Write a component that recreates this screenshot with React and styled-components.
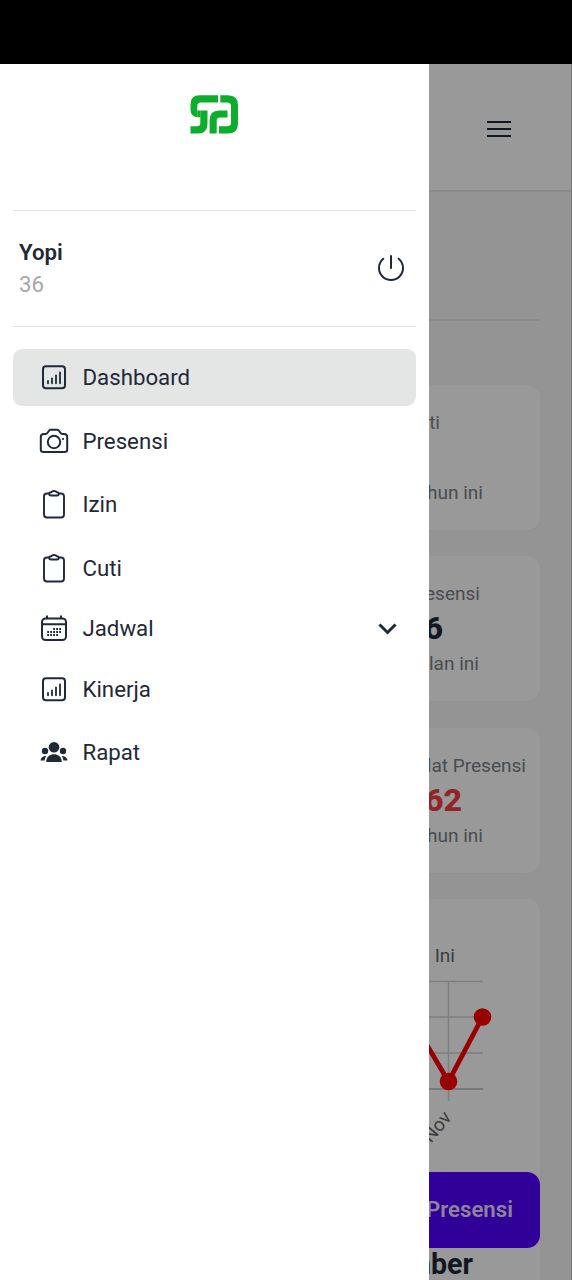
import React from 'react';
import styled, { createGlobalStyle } from 'styled-components';
import { IoPowerOutline } from 'react-icons/io5';

const GlobalStyle = createGlobalStyle`
  * {
    box-sizing: border-box;
  }
  body {
    margin: 0;
    font-family: Roboto, sans-serif;
    font-size: 22.24px;
    color: #1f2937;
    background: #000;
  }
`;

const Phone = styled.div`
  width: 572px;
  height: 1280px;
  display: flex;
  flex-direction: column;
  overflow: hidden;
`;

const StatusBar = styled.div`
  flex: 0 0 64px;
  background: #000;
`;

const Screen = styled.div`
  flex: 1;
  position: relative;
  overflow: hidden;
  background: #f7f7f7;
  border-right: 1px solid #777;
`;

const Header = styled.header`
  height: 128px;
  padding: 4px 56px 0 0;
  display: flex;
  align-items: center;
  justify-content: flex-end;
  background: #fff;
  border-bottom: 2px solid #e7e7e7;
`;

const Heading = styled.div`
  height: 129px;
  margin: 0 31px 64px 32px;
  border-bottom: 2px solid #e6e6e6;
`;

const Cards = styled.div`
  display: flex;
  flex-direction: column;
  gap: 26.4px;
  padding: 0 31px 0 32px;
`;

const Card = styled.section`
  height: ${(p) => p.$height || '145px'};
  border-radius: 13px;
  background: #fff;
  box-shadow: 0 1px 3px rgba(0, 0, 0, 0.03);
`;

const Stat = styled(Card)`
  padding-top: 20px;
  text-align: right;
  font-size: 19.06px;
  line-height: 35px;
`;

const StatText = styled.div`
  padding-right: ${(p) => p.$right}px;
  color: #797f87;
`;

const StatValue = styled.div`
  padding-right: ${(p) => p.$right}px;
  font-size: 32.2px;
  font-weight: 800;
  color: ${(p) => (p.$danger ? '#f23c40' : '#1f2937')};
`;

const ChartTitle = styled.div`
  height: 72px;
  padding: 46px 85px 0 0;
  text-align: right;
  font-size: 19.06px;
  line-height: 22px;
  color: #666;
`;

const ChartSvg = styled.svg`
  display: block;
  margin-left: auto;
  overflow: visible;
`;

const MonthTitle = styled.h2`
  margin: 95px 67px 0 0;
  text-align: right;
  font-size: 28.6px;
  font-weight: 700;
  line-height: 36px;
`;

const FloatButton = styled.button`
  position: absolute;
  right: 31px;
  bottom: 32px;
  width: 200px;
  height: 76px;
  padding: 0 27px 2px 0;
  border: 0;
  border-radius: 13px;
  background: #5000ff;
  color: #ebdcff;
  font: 600 22.24px Roboto, sans-serif;
  text-align: right;
`;

const Overlay = styled.div`
  position: absolute;
  inset: 0;
  background: rgba(0, 0, 0, 0.4);
`;

const Drawer = styled.aside`
  position: absolute;
  top: 0;
  left: 0;
  width: 429px;
  height: 100%;
  padding: 0 13px;
  background: #fff;
`;

const LogoBox = styled.div`
  height: 146px;
  padding-top: 31px;
  display: flex;
  justify-content: center;
`;

const Profile = styled.div`
  height: 117px;
  padding: 0 9px 2px 6px;
  display: flex;
  align-items: center;
  justify-content: space-between;
  border-top: 1px solid #e1e2e3;
  border-bottom: 1px solid #e1e2e3;
`;

const ProfileName = styled.div`
  line-height: 32px;
  font-weight: 600;
`;

const ProfileId = styled.div`
  line-height: 32px;
  color: #a5a7aa;
`;

const Menu = styled.nav`
  margin-top: 22px;
  display: flex;
  flex-direction: column;
  gap: 6.3px;
`;

const MenuItem = styled.a`
  height: ${(p) => (p.$compact ? '51px' : '57.3px')};
  padding: 0 12px 1px 25px;
  display: flex;
  align-items: center;
  gap: 12.5px;
  border-radius: 9px;
  background: ${(p) => (p.$active ? '#e4e6e6' : 'transparent')};
  svg {
    flex-shrink: 0;
  }
`;

const MenuLabel = styled.span`
  flex: 1;
`;

const Logo = () => (
  <svg width="49" height="39" viewBox="0 0 49 39" fill="#0bae2b">
    <path d="M9.500 0.300H28V7.500H11Q7.300 7.500 7.300 11V22.300Q0.500 21.500 0.500 14.500V9.300Q0.500 0.300 9.500 0.300Z" />
    <path d="M10.300 15.500H17.500V28.500Q17.500 38.500 8 38.500H0.500V31.300H7Q10.300 31.300 10.300 28Z" />
    <path d="M7.300 15.500H10.300V22.300H7.300Z" />
    <path d="M30.300 0.300H38Q48 0.300 48 10.300V28.500Q48 38.500 38 38.500H29V31.300H37Q41 31.300 41 28V11Q41 7.500 37 7.500H30.300Z" />
    <path d="M29 15.500H37.500V22.600H30Q26.700 22.600 26.700 26V38.500H19.600V25.500Q19.600 15.500 29 15.500Z" />
  </svg>
);

const ChartIcon = () => (
  <svg width="32" height="32" viewBox="0 0 32 32" fill="none" stroke="currentColor" strokeWidth="2" strokeLinecap="round">
    <rect x="5" y="5.300" width="22" height="22" rx="3" />
    <path strokeWidth="1.800" d="M10 22.300v-2.500M14 22.300v-5M18 22.300v-8M22 22.300v-10.800" />
  </svg>
);

const CameraIcon = () => (
  <svg width="32" height="32" viewBox="0 0 32 32" fill="none" stroke="currentColor" strokeWidth="2" strokeLinejoin="round">
    <path d="M5.800 9H7.500Q8.800 9 9.600 7.800L10.800 6Q11.500 4.800 12.800 4.800H19.200Q20.500 4.800 21.200 6L22.400 7.800Q23.200 9 24.500 9H26.200Q29.200 9.200 29.200 12V24.500Q29.200 27 26.500 27H5.500Q2.800 27 2.800 24.500V12Q2.800 9.200 5.800 9Z" />
    <circle cx="16" cy="17" r="6.200" />
    <circle cx="25" cy="14" r="1.100" fill="currentColor" stroke="none" />
  </svg>
);

const ClipboardIcon = () => (
  <svg width="32" height="32" viewBox="0 0 32 32" fill="none" stroke="currentColor" strokeWidth="1.900" strokeLinejoin="round">
    <path d="M11 5.500H9Q6 5.500 6 8.500V26.500Q6 29.500 9 29.500H23Q26 29.500 26 26.500V8.500Q26 5.500 23 5.500H21" />
    <path d="M11.200 5.700Q11.500 4.300 13 4.300Q14 3 16 3T19 4.300Q20.500 4.300 20.800 5.700Q20.800 7.500 19 7.500H13Q11.200 7.500 11.200 5.700Z" />
  </svg>
);

const CalendarIcon = () => (
  <svg width="32" height="32" viewBox="0 0 32 32" fill="none" stroke="currentColor" strokeWidth="2">
    <rect x="4" y="6.500" width="24" height="21.500" rx="3.500" />
    <path d="M4 12.200h24M9 3.500v3M23 3.500v3" />
    <path strokeWidth="1.800" strokeDasharray="1.800 1.200" d="M15.200 17h8.500M9.200 20h14.300M9.200 23h11" />
  </svg>
);

const PeopleIcon = () => (
  <svg width="32" height="32" viewBox="0 0 32 32" fill="currentColor">
    <circle cx="16" cy="11.200" r="5.300" />
    <circle cx="7" cy="15" r="3.200" />
    <circle cx="25" cy="15" r="3.200" />
    <path d="M8.200 25.500C8.700 20.500 12 18.300 16 18.300S23.300 20.500 23.800 25.500Q23.800 26 23 26H9Q8.200 26 8.200 25.500Z" />
    <path d="M8.300 20Q6.900 21.800 6.500 24.500H2.500Q3 20 8.300 20ZM23.700 20Q25.100 21.800 25.500 24.500H29.500Q29 20 23.700 20Z" />
  </svg>
);

const ChevronIcon = () => (
  <svg width="32" height="32" viewBox="0 0 32 32" fill="none" stroke="currentColor" strokeWidth="3">
    <path d="M7.500 12.500l8 8 8-8" />
  </svg>
);

const MenuIcon = () => (
  <svg width="32" height="32" viewBox="0 0 32 32" stroke="currentColor" strokeWidth="2" strokeLinecap="square">
    <path d="M5 9h22M5 16h22M5 23h22" />
  </svg>
);

const LineChart = () => (
  <ChartSvg width="130" height="180" viewBox="0 0 130 180">
    <path
      d="M0 10.500H73M0 46H73M0 82H73M38.500 10.500V130"
      fill="none"
      stroke="#d2d2d2"
      strokeWidth="1.500"
    />
    <path d="M0 118H73" stroke="#bababa" strokeWidth="1.500" />
    <path d="M-2 42L38.500 110.500L72.500 46" fill="none" stroke="#ff0000" strokeWidth="4.800" />
    <circle cx="38.500" cy="110.500" r="8.800" fill="#ff0000" />
    <circle cx="72.500" cy="46" r="8.800" fill="#ff0000" />
    <text x="42.500" y="147" fontSize="19" fill="#666" textAnchor="end" transform="rotate(-50 42.500 147)">
      Nov
    </text>
  </ChartSvg>
);

const stats = [
  { title: 'Cuti', value: '', desc: 'tahun ini', right: [100, 98, 57] },
  { title: 'Presensi', value: '6', desc: 'bulan ini', right: [60, 97, 61] },
  { title: 'Telat Presensi', value: '62', desc: 'tahun ini', right: [14, 78, 57], danger: true },
];

const menuItems = [
  { label: 'Dashboard', icon: <ChartIcon />, active: true },
  { label: 'Presensi', icon: <CameraIcon /> },
  { label: 'Izin', icon: <ClipboardIcon /> },
  { label: 'Cuti', icon: <ClipboardIcon /> },
  { label: 'Jadwal', icon: <CalendarIcon />, dropdown: true },
  { label: 'Kinerja', icon: <ChartIcon /> },
  { label: 'Rapat', icon: <PeopleIcon /> },
];

export default function App() {
  return (
    <Phone>
      <GlobalStyle />
      <StatusBar />
      <Screen>
        <Header>
          <MenuIcon />
        </Header>
        <Heading />
        <Cards>
          {stats.map((stat) => (
            <Stat key={stat.title}>
              <StatText $right={stat.right[0]}>{stat.title}</StatText>
              <StatValue $right={stat.right[1]} $danger={stat.danger}>
                {stat.value || '\u00a0'}
              </StatValue>
              <StatText $right={stat.right[2]}>{stat.desc}</StatText>
            </Stat>
          ))}
          <Card $height="500px">
            <ChartTitle>Ini</ChartTitle>
            <LineChart />
            <MonthTitle>November</MonthTitle>
          </Card>
        </Cards>
        <FloatButton>Presensi</FloatButton>
        <Overlay />
        <Drawer>
          <LogoBox>
            <Logo />
          </LogoBox>
          <Profile>
            <div>
              <ProfileName>Yopi</ProfileName>
              <ProfileId>36</ProfileId>
            </div>
            <IoPowerOutline size={32} />
          </Profile>
          <Menu>
            {menuItems.map((item) => (
              <MenuItem key={item.label} $active={item.active} $compact={item.dropdown}>
                {item.icon}
                <MenuLabel>{item.label}</MenuLabel>
                {item.dropdown && <ChevronIcon />}
              </MenuItem>
            ))}
          </Menu>
        </Drawer>
      </Screen>
    </Phone>
  );
}
